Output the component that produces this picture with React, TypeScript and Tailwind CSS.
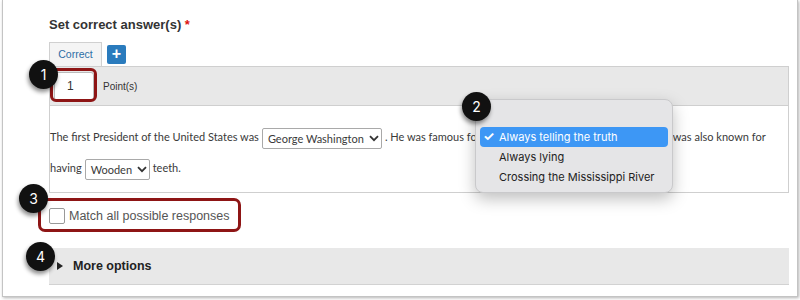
import React from "react";

const Badge = ({ n, className }: { n: number; className: string }) => (
  <div
    className={`absolute w-[29px] h-[29px] rounded-full bg-[#111] text-white flex items-center justify-center text-[14px] shadow-[-1px_3px_4px_rgba(0,0,0,0.45)] ${className}`}
    style={{ fontFamily: "Inter, sans-serif" }}
  >
    {n}
  </div>
);

const Chevron = () => (
  <svg width="10" height="7" viewBox="0 0 10 7" className="ml-[5px] flex-none">
    <path d="M1 1.2 L5 5.2 L9 1.2" fill="none" stroke="#333" strokeWidth="1.8" />
  </svg>
);

const InlineSelect = ({ label, w }: { label: string; w: string }) => (
  <span
    className={`inline-flex items-center justify-between h-[21px] px-[5px] mx-[3px] border border-[#a9a9a9] rounded-[2px] bg-white align-middle whitespace-nowrap leading-none ${w}`}
  >
    <span>{label}</span>
    <Chevron />
  </span>
);

const App: React.FC = () => {
  return (
    <div className="w-[800px] h-[300px] bg-white relative overflow-hidden">
      <div
        className="ml-[2px] w-[796px] h-[297px] border-x border-b border-[#c4c4c4] shadow-[1px_1px_3px_rgba(0,0,0,0.3)] pl-[46px] pt-[17px]"
        style={{ fontFamily: '"Liberation Sans", Arial, sans-serif' }}
      >
        <h2 className="text-[13px] leading-[16px] font-bold text-[#333]">
          Set correct answer(s) <span className="text-[#d11]">*</span>
        </h2>

        <div className="w-[740px] mt-[9px]">
          <div className="flex items-center gap-[5px] h-[24px]">
            <div className="w-[53px] h-[24px] bg-[#f4f4f4] border-x border-t border-[#d0d0d0] flex items-center justify-center text-[10.5px] text-[#2d6ea6]">
              Correct
            </div>
            <div className="w-[19px] h-[19px] bg-[#2a7bbd] rounded-[2px] flex items-center justify-center text-white font-bold text-[16px] leading-none">
              +
            </div>
          </div>

          <div className="h-[40px] bg-[#e8e8e8] border border-[#cfcfcf] flex items-center pl-[4px]">
            <div className="w-[40px] h-[29px] bg-white border border-[#bbb] rounded-[3px] flex items-center pl-[12px] text-[12px] text-[#333]">
              1
            </div>
            <span className="ml-[9px] text-[10px] text-[#333]">Point(s)</span>
          </div>

          <div
            className="border-x border-b border-[#cfcfcf] pt-[15px] pb-[9px] text-[11px] leading-[31px] text-[#3a3a3a]"
            style={{ fontFamily: "Lato, sans-serif" }}
          >
            <p>
              The first President of the United States was
              <InlineSelect label="George Washington" w="w-[120px]" />. He was famous for
              <InlineSelect label="Always telling the truth" w="w-[164px]" />. He was also known for
              having
              <InlineSelect label="Wooden" w="w-[65px]" />
              teeth.
            </p>
          </div>

          <label className="flex items-center h-[16px] mt-[15px] text-[12.5px] text-[#555]">
            <span className="w-[16px] h-[16px] border border-[#999] rounded-[2px] bg-white" />
            <span className="ml-[4px]">Match all possible responses</span>
          </label>

          <div className="mt-[24px] h-[37px] bg-[#e8e8e8] border-b border-[#d2d2d2] flex items-center pl-[8px]">
            <svg width="6" height="8" viewBox="0 0 6 8">
              <path d="M0 0 L6 4 L0 8 Z" fill="#222" />
            </svg>
            <span className="ml-[10px] text-[12.5px] font-bold text-[#222]">More options</span>
          </div>
        </div>
      </div>

      {/* annotation highlights */}
      <div className="absolute left-[50px] top-[68px] w-[47px] h-[34px] border-[3px] border-[#8e1515] rounded-[6px]" />
      <div className="absolute left-[38px] top-[198px] w-[203px] h-[34px] border-[3px] border-[#8e1515] rounded-[7px]" />

      {/* native select popup */}
      <div
        className="absolute left-[475px] top-[99px] w-[198px] h-[94px] bg-[#e5e5e7] border border-[#c9c9cb] rounded-[8px] shadow-[0_6px_16px_rgba(0,0,0,0.25)] pt-[27px] px-[4px] text-[11px] text-[#222]"
        style={{ fontFamily: "Inter, sans-serif" }}
      >
        <div className="h-[20px] bg-[#3d97f5] rounded-[4px] text-white flex items-center">
          <span className="w-[19px] pl-[3px] text-[13px] font-bold">✓</span>
          <span>Always telling the truth</span>
        </div>
        <div className="h-[20px] flex items-center pl-[19px]">Always lying</div>
        <div className="h-[20px] flex items-center pl-[19px]">Crossing the Mississippi River</div>
      </div>

      <Badge n={1} className="left-[29px] top-[60px]" />
      <Badge n={2} className="left-[462px] top-[92px]" />
      <Badge n={3} className="left-[19px] top-[184px]" />
      <Badge n={4} className="left-[26px] top-[242px]" />
    </div>
  );
};

export default App;
